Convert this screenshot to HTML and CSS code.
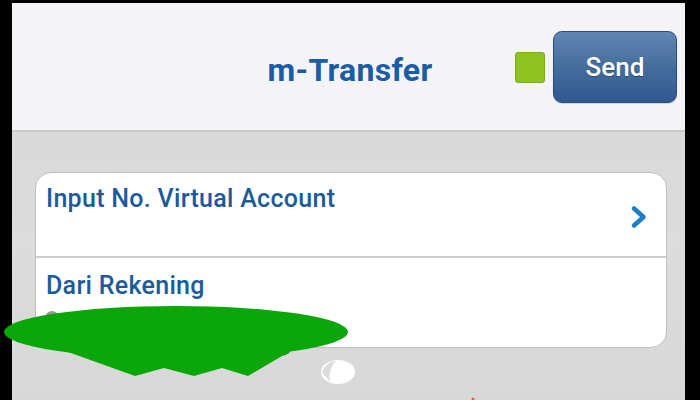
FILE: index.html
```html
<!DOCTYPE html>
<html lang="id">
<head>
<meta charset="utf-8">
<title>m-Transfer</title>
<link rel="stylesheet" href="styles.css">
</head>
<body>
<div class="screen">
  <header class="topbar">
    <div class="spacer"></div>
    <h1 class="title">m-Transfer</h1>
    <div class="actions">
      <span class="status"></span>
      <button class="send">Send</button>
    </div>
  </header>
  <main class="content">
    <section class="card">
      <div class="row row-first">
        <span class="label">Input No. Virtual Account</span>
        <svg class="chev" width="18" height="24" viewBox="0 0 18 24"><path d="M4 3.5 L13.5 12 L4 20.5" fill="none" stroke="#1f7cc6" stroke-width="4.5" stroke-linecap="round" stroke-linejoin="round"/></svg>
      </div>
      <div class="row row-second">
        <span class="label">Dari Rekening</span>
      </div>
    </section>
  </main>
</div>
<svg class="scribble" width="700" height="400" viewBox="0 0 700 400">
  <circle cx="52" cy="318" r="7" fill="#9a9a9a"/>
  <ellipse cx="338" cy="372" rx="17" ry="12" fill="#ffffff"/>
  <path d="M322 372 Q326 362 336 361 Q328 368 330 382 Z" fill="#dcdcdc"/>
  <path d="M68 348 L292 346 Q292 354 282 356 L248 376 L222 368 L194 376 L164 368 L135 376 Q96 362 68 352 Z" fill="#0aa60a"/>
  <ellipse cx="176" cy="332" rx="172" ry="26" fill="#0aa60a"/>
  <circle cx="473" cy="399" r="1.5" fill="#e06050"/>
</svg>
</body>
</html>
```
FILE: styles.css
```css
html, body {
  margin: 0;
  padding: 0;
}
body {
  background: #000;
  width: 700px;
  height: 400px;
  overflow: hidden;
  position: relative;
  font-family: Roboto, "Liberation Sans", Arial, sans-serif;
}
.screen {
  margin: 3px 15px 0 12px;
  height: 397px;
  background: linear-gradient(180deg, #d6d6d6 0%, #dcdcdc 60%, #d8d8d8 100%);
  display: flex;
  flex-direction: column;
}
.topbar {
  background: #f4f4f6;
  border-bottom: 2px solid #c9c9c9;
  display: grid;
  grid-template-columns: 1fr auto 1fr;
  align-items: center;
  padding: 0 8px 0 11px;
  box-sizing: border-box;
  height: 129px;
}
.title {
  margin: 0;
  font-size: 32px;
  font-weight: 700;
  color: #1b5ca6;
  letter-spacing: 0.3px;
  padding-top: 6px;
}
.actions {
  justify-self: end;
  display: flex;
  align-items: center;
  gap: 8px;
}
.status {
  width: 28px;
  height: 29px;
  background: #8ec320;
  border: 1px solid #7cae18;
  border-radius: 3px;
  margin-top: 2px;
}
.send {
  width: 124px;
  height: 72px;
  border: 1px solid #2b4c7c;
  border-radius: 9px;
  background: linear-gradient(180deg, #6286b4 0%, #47709f 45%, #2f5891 100%);
  color: #fff;
  font-family: Roboto, "Liberation Sans", Arial, sans-serif;
  font-size: 26px;
  font-weight: 500;
  padding: 0;
  box-shadow: 0 1px 1px rgba(0,0,0,0.15);
  text-shadow: 0 1px 1px rgba(0,0,0,0.3);
}
.content {
  padding: 40px 18px 0 23px;
}
.card {
  background: #fff;
  border: 1px solid #bfbfbf;
  border-radius: 16px;
  height: 176px;
  box-sizing: border-box;
  display: flex;
  flex-direction: column;
}
.row {
  display: flex;
  justify-content: space-between;
  padding: 0 18px 0 10px;
}
.row-first {
  height: 85px;
  border-bottom: 2px solid #cdcdcd;
  padding-top: 12px;
  box-sizing: border-box;
}
.row-second {
  flex: 1;
  padding-top: 14px;
}
.label {
  font-size: 25px;
  font-weight: 500;
  line-height: 28px;
  letter-spacing: 0.3px;
  color: #1b5b9d;
  align-self: flex-start;
}
.chev {
  align-self: center;
  margin-top: -8px;
}
.scribble {
  position: absolute;
  left: 0;
  top: 0;
}
```
